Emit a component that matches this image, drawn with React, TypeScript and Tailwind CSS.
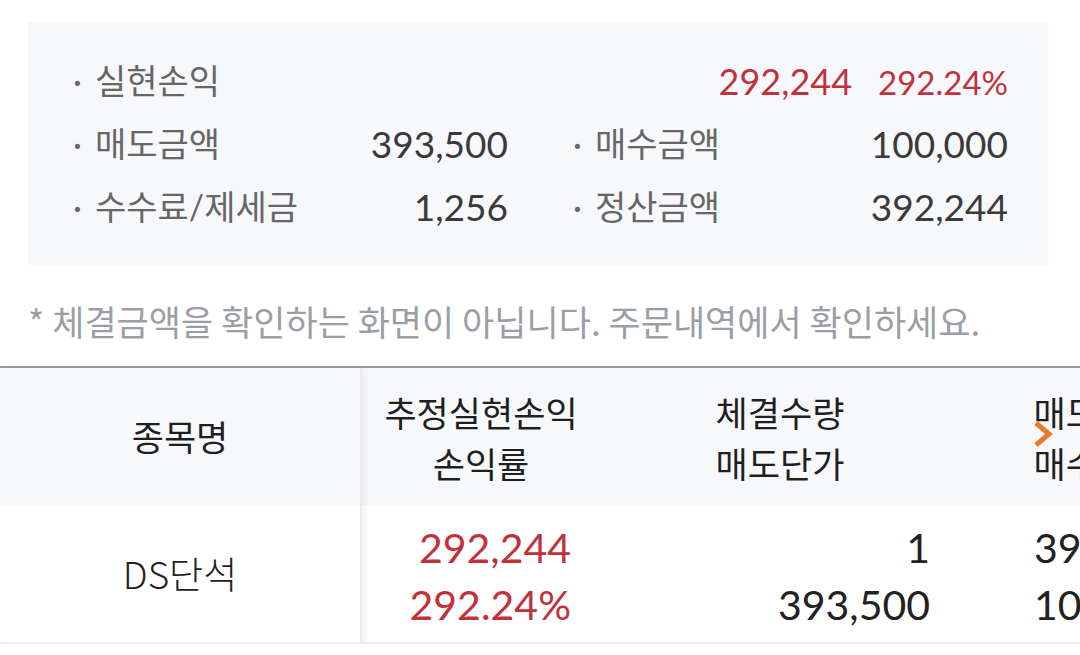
import React from 'react';

const RED = 'text-[#c2303b]';

const Dot = () => <span className="inline-block w-[22px] text-[#666]">·</span>;

const SummaryRow: React.FC<{ label: string; value: string }> = ({ label, value }) => (
  <div className="flex h-[63px] items-center justify-between">
    <span className="flex items-center text-[34px] text-[#666]">
      <Dot />
      {label}
    </span>
    <span className="text-[37px] text-[#3a3a3a]">{value}</span>
  </div>
);

export default function App() {
  return (
    <div className="w-[1080px] h-[655px] overflow-hidden bg-white font-['Lato','Noto_Sans_CJK_KR',sans-serif]">
      {/* summary box */}
      <div className="pt-[22px] pl-[28px]">
        <div className="w-[1020px] h-[243px] bg-[#f7f8fb] pl-[45px] pr-[40px] py-[27px]">
          <div className="flex h-[63px] items-center justify-between">
            <span className="flex items-center text-[34px] text-[#666]">
              <Dot />
              실현손익
            </span>
            <span className="flex items-baseline gap-[26px]">
              <span className={`text-[36px] ${RED}`}>292,244</span>
              <span className={`text-[33px] ${RED}`}>292.24%</span>
            </span>
          </div>
          <div className="grid grid-cols-2 gap-x-[65px]">
            <SummaryRow label="매도금액" value="393,500" />
            <SummaryRow label="매수금액" value="100,000" />
            <SummaryRow label="수수료/제세금" value="1,256" />
            <SummaryRow label="정산금액" value="392,244" />
          </div>
        </div>
      </div>

      {/* notice */}
      <div className="mt-[35px] pl-[28px] text-[35px] leading-[42px] text-[#9a9ea6] font-['Noto_Sans_CJK_KR',sans-serif]">
        * 체결금액을 확인하는 화면이 아닙니다. 주문내역에서 확인하세요.
      </div>

      {/* table */}
      <div className="relative mt-[24px] flex border-t-2 border-[#9a9a9a]">
        <div className="relative z-10 w-[362px] shrink-0 border-r-2 border-[#ebebeb] shadow-[4px_0_5px_rgba(0,0,0,0.04)]">
          <div className="flex h-[137px] items-center justify-center bg-[#f7f8fb] text-[35px] text-[#1f1f1f] font-['Noto_Sans_CJK_KR',sans-serif]">
            종목명
          </div>
          <div className="flex h-[139px] items-center justify-center border-b-2 border-[#eeeeee] bg-white text-[37px] font-light text-[#222] font-['Noto_Sans_CJK_KR',sans-serif]">
            DS단석
          </div>
        </div>

        <div className="flex-1 overflow-hidden">
          <div className="flex h-[137px] w-max bg-[#f7f8fb] text-[35px] leading-[51px] text-[#1f1f1f] font-['Noto_Sans_CJK_KR',sans-serif]">
            <div className="flex w-[238px] flex-col items-center justify-center">
              <span>추정실현손익</span>
              <span>손익률</span>
            </div>
            <div className="flex w-[360px] flex-col items-center justify-center">
              <span>체결수량</span>
              <span>매도단가</span>
            </div>
            <div className="flex w-[276px] flex-col items-center justify-center">
              <span>매도금액</span>
              <span>매수금액</span>
            </div>
          </div>
          <div className="flex h-[139px] w-max border-b-2 border-[#eeeeee] pt-[4px] text-[41px] leading-[57px] text-[#222]">
            <div className={`flex w-[238px] flex-col items-end justify-center pr-[29px] ${RED}`}>
              <span>292,244</span>
              <span>292.24%</span>
            </div>
            <div className="flex w-[360px] flex-col items-end justify-center pr-[30px]">
              <span>1</span>
              <span>393,500</span>
            </div>
            <div className="flex w-[276px] flex-col items-end justify-center pr-[50px]">
              <span>393,500</span>
              <span>100,000</span>
            </div>
          </div>
        </div>

        {/* scroll hint */}
        <svg
          className="absolute left-[1032px] top-[51px] z-20"
          width="22"
          height="30"
          viewBox="0 0 22 30"
          fill="none"
        >
          <polyline points="4,4 17,15 4,26" stroke="#e57b2c" strokeWidth="5" strokeLinejoin="miter" />
        </svg>
      </div>
    </div>
  );
}
